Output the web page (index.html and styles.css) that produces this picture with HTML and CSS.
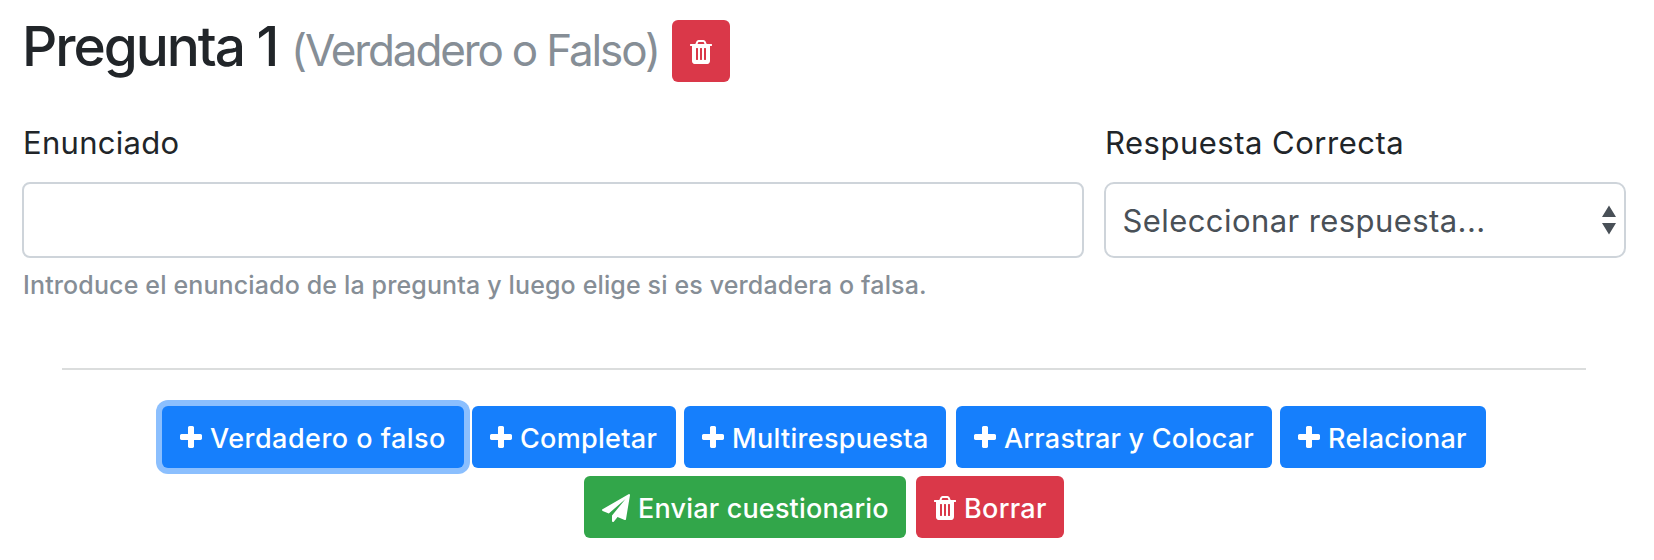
FILE: index.html
```html
<!DOCTYPE html>
<html lang="es">
<head>
<meta charset="utf-8">
<title>Cuestionario</title>
<link rel="stylesheet" href="styles.css">
</head>
<body>
<svg width="0" height="0" class="sprite" aria-hidden="true">
  <symbol id="plus" viewBox="192 0 1408 1792"><path d="M1600 736v192q0 40-28 68t-68 28h-416v416q0 40-28 68t-68 28h-192q-40 0-68-28t-28-68v-416h-416q-40 0-68-28t-28-68v-192q0-40 28-68t68-28h416v-416q0-40 28-68t68-28h192q40 0 68 28t28 68v416h416q40 0 68 28t28 68z"/></symbol>
  <symbol id="trash" viewBox="192 0 1408 1792"><path d="M704 1376v-704q0-14-9-23t-23-9h-64q-14 0-23 9t-9 23v704q0 14 9 23t23 9h64q14 0 23-9t9-23zm256 0v-704q0-14-9-23t-23-9h-64q-14 0-23 9t-9 23v704q0 14 9 23t23 9h64q14 0 23-9t9-23zm256 0v-704q0-14-9-23t-23-9h-64q-14 0-23 9t-9 23v704q0 14 9 23t23 9h64q14 0 23-9t9-23zm-544-992h448l-48-117q-7-9-17-11h-317q-10 2-17 11zm928 32v64q0 14-9 23t-23 9h-96v948q0 83-47 143.500t-113 60.500h-832q-66 0-113-58.500t-47-141.500v-952h-96q-14 0-23-9t-9-23v-64q0-14 9-23t23-9h309l70-167q15-37 54-63t79-26h320q40 0 79 26t54 63l70 167h309q14 0 23 9t9 23z"/></symbol>
  <symbol id="plane" viewBox="0 0 1792 1792"><path d="M1764 11q33 24 27 64l-256 1536q-5 29-32 45-14 8-31 8-11 0-24-5l-453-185-242 295q-18 23-49 23-13 0-22-4-19-7-30.500-23.500t-11.500-36.500v-349l864-1059-1069 925-395-162q-37-14-40-55-2-40 32-59l1664-960q15-9 32-9 20 0 36 11z"/></symbol>
</svg>
<main class="page">
  <header class="question-head">
    <h1 class="title">Pregunta 1</h1>
    <span class="kind">(Verdadero o Falso)</span>
    <button class="btn btn-danger btn-icon" aria-label="Borrar pregunta"><svg class="icon"><use href="#trash"/></svg></button>
  </header>
  <div class="form-row">
    <div class="field field-text">
      <label class="label" for="enunciado">Enunciado</label>
      <input class="input" id="enunciado" type="text">
      <small class="help">Introduce el enunciado de la pregunta y luego elige si es verdadera o falsa.</small>
    </div>
    <div class="field field-answer">
      <span class="label label-answer">Respuesta Correcta</span>
      <div class="select">
        <span class="select-value">Seleccionar respuesta...</span>
        <svg class="caret" viewBox="0 0 14 30"><path d="M7 0.500L14 12H0zM0 18h14L7 29.500z"/></svg>
      </div>
    </div>
  </div>
  <hr class="divider">
  <div class="actions">
    <button class="btn btn-primary btn-focus btn-truefalse"><svg class="icon"><use href="#plus"/></svg><span>Verdadero o falso</span></button>
    <button class="btn btn-primary btn-complete"><svg class="icon"><use href="#plus"/></svg><span>Completar</span></button>
    <button class="btn btn-primary btn-multi"><svg class="icon"><use href="#plus"/></svg><span>Multirespuesta</span></button>
    <button class="btn btn-primary btn-drag"><svg class="icon"><use href="#plus"/></svg><span>Arrastrar y Colocar</span></button>
    <button class="btn btn-primary btn-relate"><svg class="icon"><use href="#plus"/></svg><span>Relacionar</span></button>
  </div>
  <div class="actions actions-final">
    <button class="btn btn-success btn-send"><svg class="icon icon-wide"><use href="#plane"/></svg><span>Enviar cuestionario</span></button>
    <button class="btn btn-danger btn-clear"><svg class="icon"><use href="#trash"/></svg><span>Borrar</span></button>
  </div>
</main>
</body>
</html>
```
FILE: styles.css
```css
* { box-sizing: border-box; }
body {
  margin: 0;
  background: #fff;
  color: #212529;
  font-family: Inter, "Liberation Sans", sans-serif;
  font-size: 31px;
}
.sprite { display: block; height: 0; }
.page { padding: 20px 28px 0 22px; }

.question-head { display: flex; align-items: flex-start; height: 62px; }
.title {
  margin: 0;
  width: 269px;
  font-size: 55px;
  font-weight: 500;
  line-height: 52px;
  letter-spacing: -2.05px;
  white-space: nowrap;
}
.kind {
  width: 381px;
  padding-top: 4px;
  color: #868e96;
  font-size: 44px;
  line-height: 52px;
  letter-spacing: -2.15px;
  white-space: nowrap;
}

.form-row { display: flex; gap: 20px; margin-top: 37px; }
.field { display: flex; flex-direction: column; }
.field-text { width: 1062px; }
.field-answer { width: 522px; }
.label { margin-bottom: 15px; padding-left: 1px; line-height: 48px; letter-spacing: 0.3px; }
.label-answer { letter-spacing: 0.5px; }
.input {
  height: 76px;
  border: 2px solid #ced4da;
  border-radius: 8px;
  background: #fff;
  padding: 0 22px;
  font: inherit;
}
.select {
  display: flex;
  align-items: center;
  justify-content: space-between;
  height: 76px;
  padding: 0 8.5px 0 16.5px;
  border: 2px solid #ced4da;
  border-radius: 10px;
  color: #495057;
}
.select-value { letter-spacing: 0.42px; }
.caret { width: 14px; height: 30px; fill: #495057; }
.help {
  margin-top: 8px;
  padding-left: 1px;
  color: #868e96;
  font-size: 25px;
  font-weight: 480;
  line-height: 38px;
  letter-spacing: 0.14px;
}

.divider {
  height: 2px;
  margin: 64px 40px 36px;
  border: 0;
  background: #dbdddd;
}

.actions { display: flex; justify-content: center; gap: 8px; margin-left: 20px; width: 1564px; }
.actions-final { gap: 10px; margin-top: 8px; }
.btn {
  display: flex;
  flex: none;
  align-items: center;
  gap: 8px;
  height: 62px;
  padding: 0 0 0 18px;
  border: 0;
  border-radius: 6px;
  color: #fff;
  font: 500 27px Inter, "Liberation Sans", sans-serif;
  letter-spacing: 0.3px;
  white-space: nowrap;
}
.btn span { padding-top: 2px; }
.icon { flex: none; width: 22px; height: 28px; margin-top: 2px; fill: currentColor; }
.icon-wide { width: 28px; }
.btn-primary { background: #167ffc; }
.btn-success { background: #32a64a; }
.btn-danger { background: #da3849; }
.btn-focus { box-shadow: 0 0 0 6px #8bbffe; }
.btn-icon { width: 58px; padding-left: 17.5px; }
.btn-truefalse { width: 302px; letter-spacing: 0.48px; }
.btn-complete { width: 204px; }
.btn-multi { width: 262px; margin-right: 2px; }
.btn-drag { width: 316px; letter-spacing: 0.2px; }
.btn-relate { width: 206px; }
.btn-send { width: 322px; letter-spacing: 0.18px; }
.btn-clear { width: 148px; }
```
